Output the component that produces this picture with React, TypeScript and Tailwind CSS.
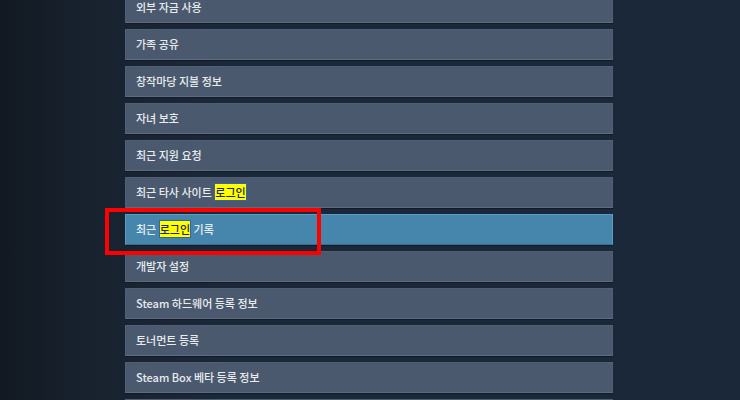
const rows: { parts: (string | { hl: string })[]; active?: boolean }[] = [
  { parts: ["외부 자금 사용"] },
  { parts: ["가족 공유"] },
  { parts: ["창작마당 지불 정보"] },
  { parts: ["자녀 보호"] },
  { parts: ["최근 지원 요청"] },
  { parts: ["최근 타사 사이트 ", { hl: "로그인" }] },
  { parts: ["최근 ", { hl: "로그인" }, " 기록"], active: true },
  { parts: ["개발자 설정"] },
  { parts: ["Steam 하드웨어 등록 정보"] },
  { parts: ["토너먼트 등록"] },
  { parts: ["Steam Box 베타 등록 정보"] },
  { parts: [] },
];

export default function App() {
  return (
    <div
      className="relative h-[400px] w-[740px] overflow-hidden bg-[linear-gradient(90deg,#121922_0%,#18222f_12%,#1b2839_30%,#1b2839_100%)]"
      style={{ fontFamily: '"Noto Sans CJK KR", "Noto Sans", sans-serif' }}
    >
      <div className="ml-[125px] mt-[-8px] flex w-[488px] flex-col gap-[6px]">
        {rows.map((row, i) => (
          <div
            key={i}
            className={`flex h-[31px] shrink-0 items-center border px-[10px] text-[11px] font-medium shadow-[0_1px_0_#121a25] ${
              row.active
                ? "border-[#5c9cc4] border-b-[#3b6f8f] bg-[#4686ad] text-[#e6eef3]"
                : "border-[#4f5f74] border-b-[#5d6c80] bg-[#4a596e] text-[#e8ecef]"
            }`}
          >
            <span className="whitespace-pre">
              {row.parts.map((p, j) =>
                typeof p === "string" ? (
                  <span key={j}>{p}</span>
                ) : (
                  <span
                    key={j}
                    className="border border-[#3b62a8] bg-[#ffff00] text-[#1b2838]"
                  >
                    {p.hl}
                  </span>
                )
              )}
            </span>
          </div>
        ))}
      </div>
      <div className="absolute left-[105px] top-[208px] h-[47px] w-[216px] border-4 border-[#ff0000]" />
    </div>
  );
}
